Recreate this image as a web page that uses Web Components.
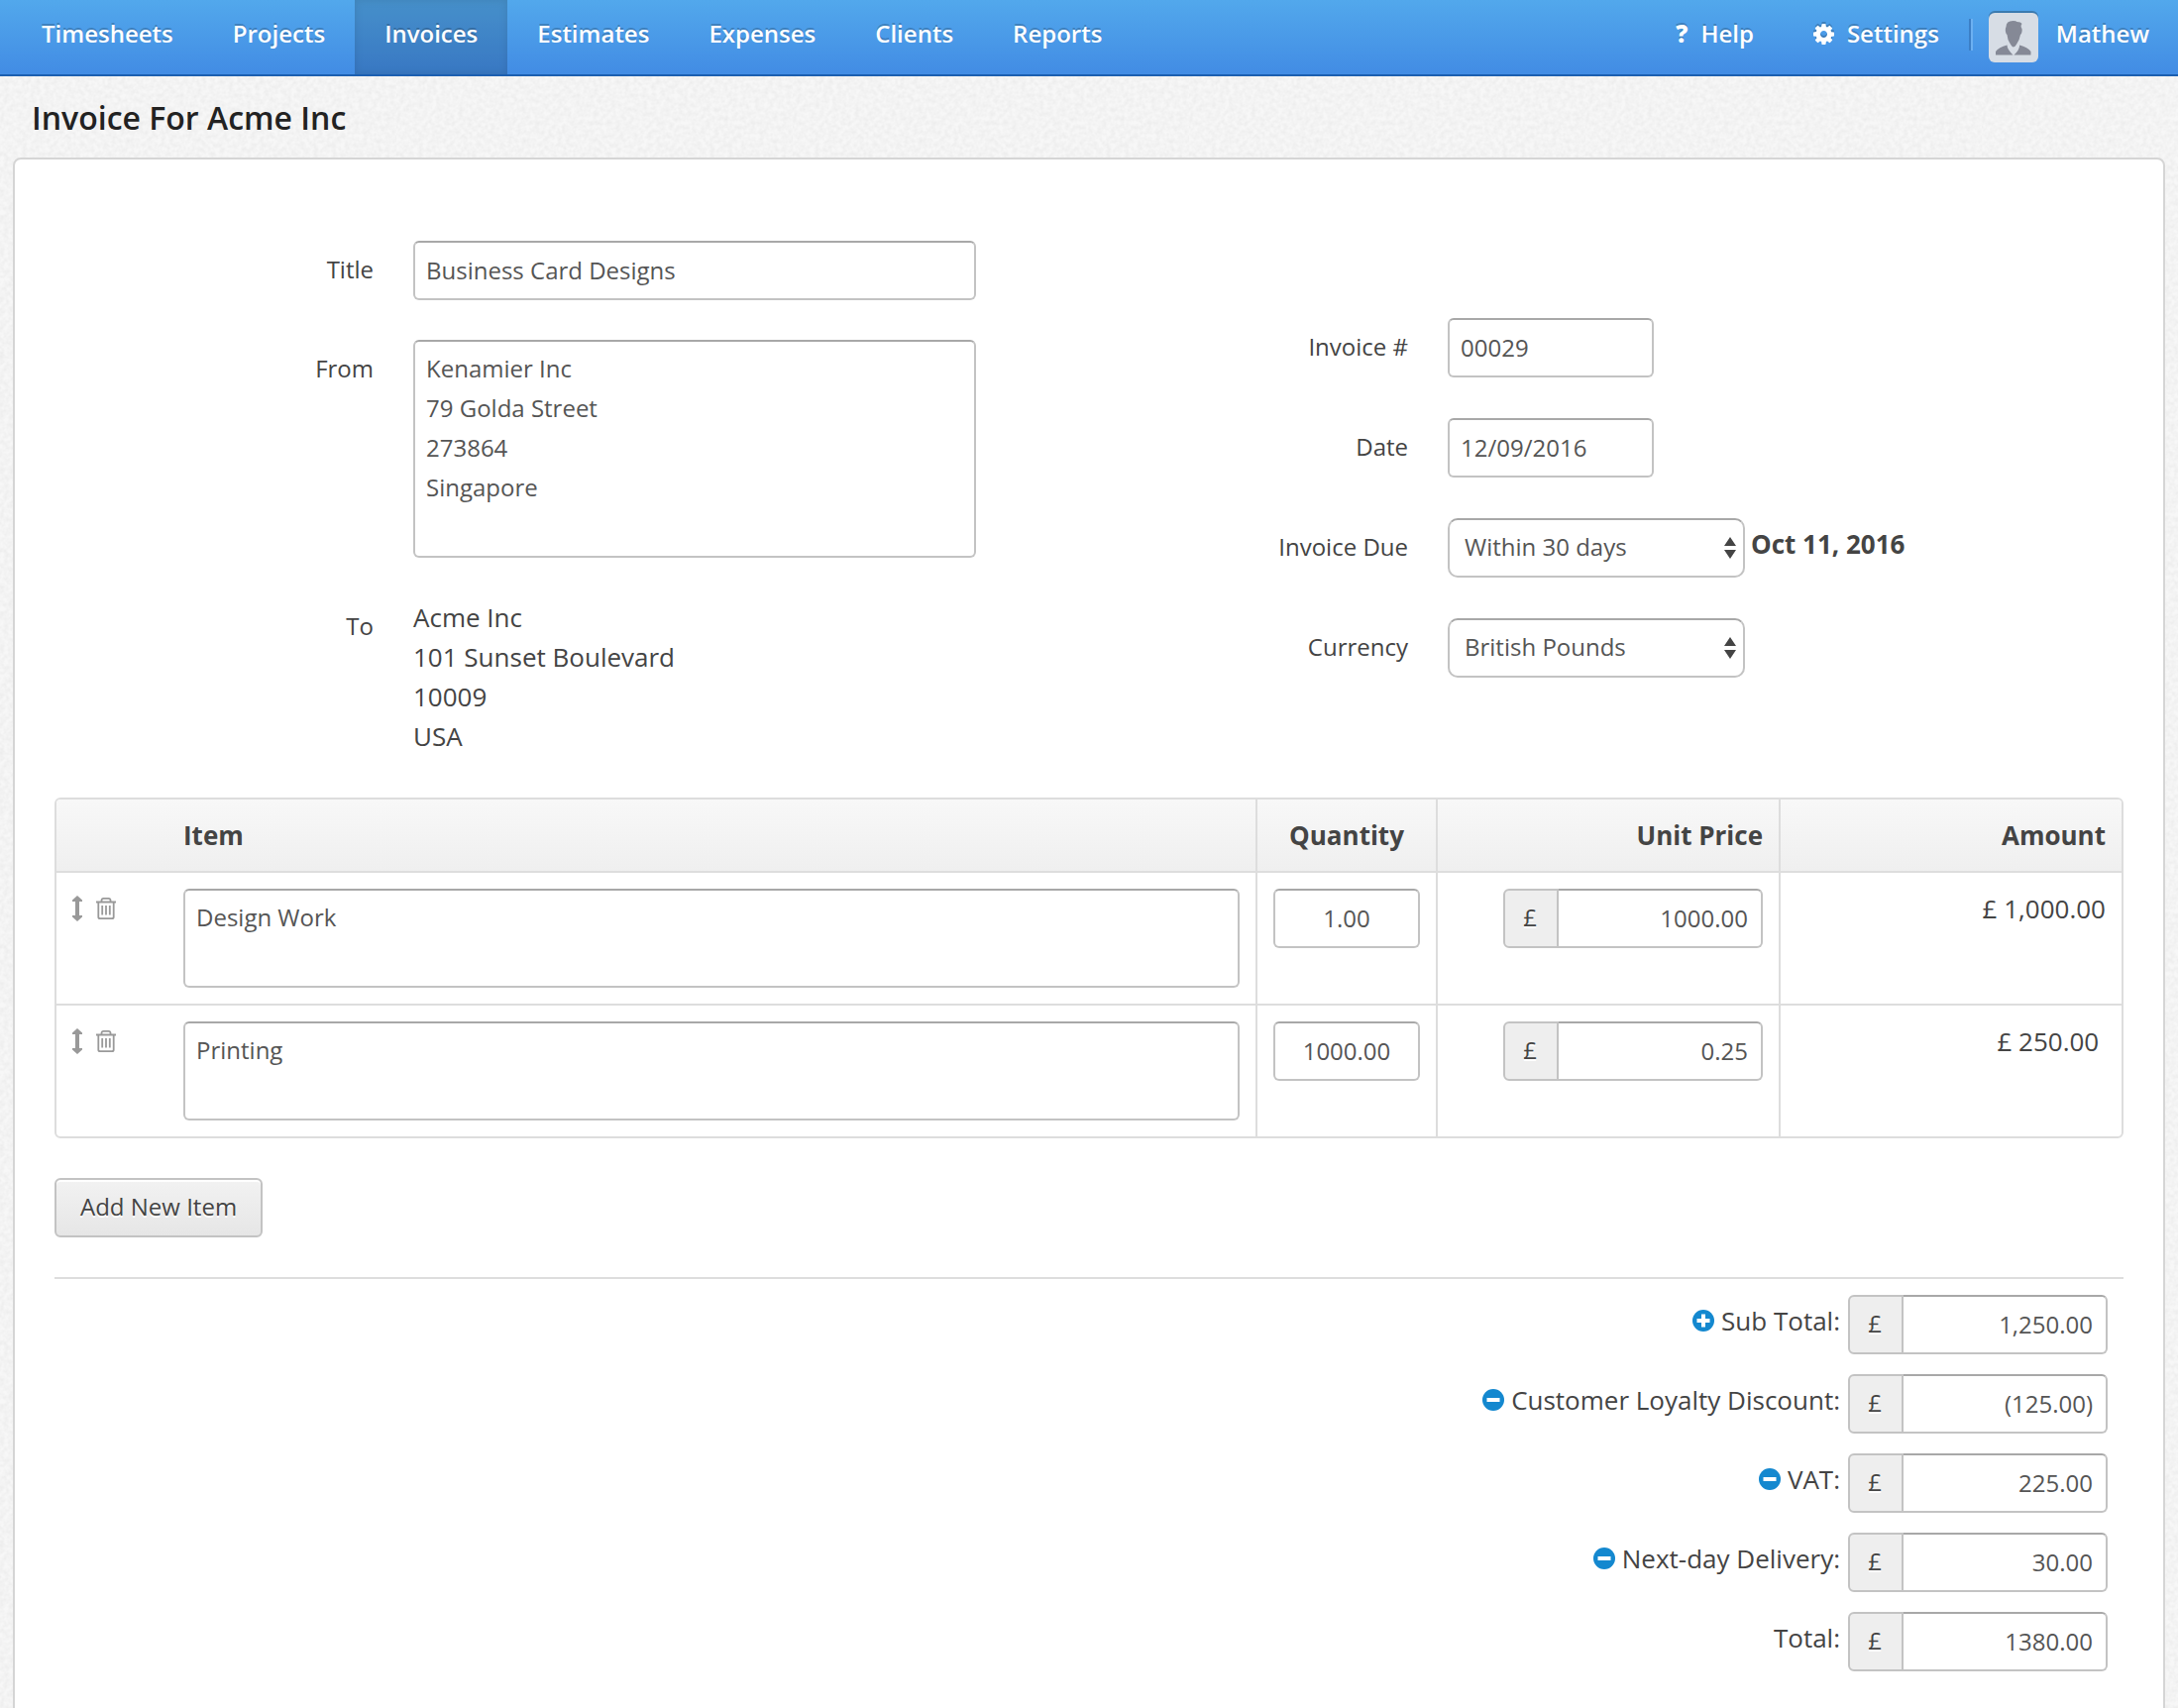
<!DOCTYPE html>
<html lang="en">
<head>
<meta charset="utf-8">
<title>Invoice For Acme Inc</title>
<style>
  html {
    background-color: #f7f7f7;
    background-image: url("data:image/svg+xml,%3Csvg xmlns='http://www.w3.org/2000/svg' width='400' height='400'%3E%3Cfilter id='n' color-interpolation-filters='sRGB'%3E%3CfeTurbulence type='fractalNoise' baseFrequency='.22' numOctaves='2' stitchTiles='stitch'/%3E%3CfeColorMatrix values='0 0 0 0 0 0 0 0 0 0 0 0 0 0 0 .07 0 0 0 -.02'/%3E%3C/filter%3E%3Crect width='400' height='400' filter='url(%23n)'/%3E%3C/svg%3E");
  }
  body {
    margin: 0;
    overflow: hidden;
    color: #444;
    font: 26px/40px "Open Sans", sans-serif;
  }
</style>
</head>
<body>
<invoice-app></invoice-app>

<script>
/* Shared look of text boxes, used by every field-like component */
const FIELD_STYLES = `
  *, *::before, *::after { box-sizing: border-box; }
  input, textarea, select {
    display: block;
    width: 100%;
    margin: 0;
    padding: 7px 11px 9px;
    border: 2px solid #c3c3c3;
    border-top-color: #a8a8a8;
    border-radius: 6px;
    background: #fff;
    color: #555;
    font: inherit;
    font-size: 24px;
    line-height: 40px;
    outline: 0;
  }
  input { height: 60px; }
  textarea { resize: none; overflow: hidden; }
`

class BaseElement extends HTMLElement {
  constructor() {
    super()
    this.attachShadow({ mode: 'open' })
  }

  connectedCallback() {
    this.shadowRoot.innerHTML = `<style>${this.getStyles()}</style>${this.getMarkup()}`
  }

  attr(name, fallback = '') {
    return this.getAttribute(name) || fallback
  }
}

/**
 * Icons
 */
const ICONS = {
  gear: `<svg width="21" height="21" viewBox="0 128 1536 1536"><path fill="currentColor" d="M1024 896q0-106-75-181t-181-75-181 75-75 181 75 181 181 75 181-75 75-181zm512-109v222q0 12-8 23t-20 13l-185 28q-19 54-39 91 35 50 107 138 10 12 10 25t-9 23q-27 37-99 108t-94 71q-12 0-26-9l-138-108q-44 23-91 38-16 136-29 186-7 28-36 28h-222q-14 0-24.500-8.500t-11.500-21.500l-28-184q-49-16-90-37l-141 107q-10 9-25 9-14 0-25-11-126-114-165-168-7-10-7-23 0-12 8-23 15-21 51-66.500t54-70.500q-27-50-41-99l-183-27q-13-2-21-12.500t-8-23.500v-222q0-12 8-23t19-13l186-28q14-46 39-92-40-57-107-138-10-12-10-24 0-10 9-23 26-36 98.500-107.500t94.500-71.500q13 0 26 10l138 107q44-23 91-38 16-136 29-186 7-28 36-28h222q14 0 24.500 8.500t11.500 21.500l28 184q49 16 90 37l142-107q9-9 24-9 13 0 25 10 129 119 165 170 7 8 7 22 0 12-8 23-15 21-51 66.500t-54 70.500q26 50 41 98l183 28q13 2 21 12.500t8 23.500z"/></svg>`,
  move: `<svg width="10" height="26" viewBox="0 0 10 26"><path fill="currentColor" d="M5 0l5 4.500V6H7v14h3v1.500L5 26l-5-4.500V20h3V6H0V4.500z"/></svg>`,
  trash: `<svg width="20" height="22" viewBox="0 0 20 22" fill="none" stroke="currentColor" stroke-width="1.800"><path d="M0 4.500h20M5.500 4V2.800q0-2 2-2h5q2 0 2 2V4M2.300 4.500v15q0 1.700 1.700 1.700h12q1.700 0 1.700-1.700v-15M6.200 8v9.500M10 8v9.500M13.800 8v9.500"/></svg>`,
  plus: `<svg width="22" height="22" viewBox="0 0 22 22"><circle cx="11" cy="11" r="11" fill="#1488cf"/><path d="M11 4.500v13M4.500 11h13" stroke="#fff" stroke-width="4"/></svg>`,
  minus: `<svg width="22" height="22" viewBox="0 0 22 22"><circle cx="11" cy="11" r="11" fill="#1488cf"/><path d="M4.500 11h13" stroke="#fff" stroke-width="4"/></svg>`,
  sort: `<svg width="12" height="22" viewBox="0 0 12 22"><path fill="#444" d="M6 0l6 9H0zM6 22l6-9H0z"/></svg>`,
  avatar: `<svg width="50" height="50" viewBox="0 0 50 50"><g fill="#858996"><path d="M17.500 14q0-6 7-6 3 0 4 1 4 0 5 2-1.500 2-.5 4 1 1 .5 4-.5 3-1.500 3-1 5-3 8-2.500 4.500-4 4.500t-4-4.500q-2-3-2.500-8-1 0-1.500-3-.5-3 .5-5z"/><path d="M18.500 32.500q0 4 6 10H7v-3.500q3-4.500 11.500-6.500zM31 32.500q8.500 2 11.500 6.500v3.500H25.500q6-6 5.500-10z"/></g></svg>`
}

class AppIcon extends BaseElement {
  getStyles() {
    return `
      :host { display: inline-block; flex: none; line-height: 0; }
      svg { display: block; overflow: visible; }
    `
  }

  getMarkup() {
    return ICONS[this.attr('name')] || ''
  }
}

/**
 * Top navigation
 */
class NavLink extends BaseElement {
  getStyles() {
    return `
      :host { display: block; }
      a {
        display: flex;
        align-items: center;
        gap: 13px;
        height: 75px;
        box-sizing: border-box;
        padding: 14px 30px 21px;
        color: #fff;
        font-size: 24px;
        font-weight: 600;
        line-height: 40px;
        text-decoration: none;
        text-shadow: 0 -2px 0 rgba(0, 0, 0, .2);
        white-space: nowrap;
      }
      :host([active]) a {
        background: rgba(0, 0, 0, .14);
        box-shadow: inset 0 0 8px rgba(0, 0, 0, .1);
      }
      ::slotted(span) { font-weight: 800; }
      ::slotted(app-icon) { filter: drop-shadow(0 -2px 0 rgba(0, 0, 0, .2)); }
    `
  }

  getMarkup() {
    const current = this.hasAttribute('active') ? 'aria-current="page"' : ''
    return `<a href="#" ${current}><slot name="icon"></slot><slot></slot></a>`
  }
}

class TopNav extends BaseElement {
  getStyles() {
    return `
      :host {
        display: block;
        background: linear-gradient(#52a8ec, #428ce4);
        border-bottom: 2px solid #1c5fb0;
      }
      nav { display: flex; padding-left: 12px; }
      .right { display: flex; margin-left: auto; }
      .divider {
        width: 2px;
        height: 32px;
        margin-top: 19px;
        background: #3c7fc6;
        border-right: 2px solid #6cb0f1;
      }
      .user a {
        display: flex;
        gap: 18px;
        padding: 13px 29px 10px 16px;
        color: #fff;
        font-size: 24px;
        font-weight: 600;
        line-height: 42px;
        text-decoration: none;
        text-shadow: 0 -2px 0 rgba(0, 0, 0, .2);
      }
      .avatar {
        width: 50px;
        height: 50px;
        border-radius: 6px;
        background: #d7dde5;
        box-shadow: 0 -2px 0 rgba(0, 0, 0, .25);
      }
    `
  }

  getMarkup() {
    return `
      <nav>
        <nav-link>Timesheets</nav-link>
        <nav-link>Projects</nav-link>
        <nav-link active>Invoices</nav-link>
        <nav-link>Estimates</nav-link>
        <nav-link>Expenses</nav-link>
        <nav-link>Clients</nav-link>
        <nav-link>Reports</nav-link>
        <div class="right">
          <nav-link><span slot="icon">?</span>Help</nav-link>
          <nav-link><app-icon slot="icon" name="gear"></app-icon>Settings</nav-link>
          <div class="divider"></div>
          <div class="user">
            <a href="#"><app-icon class="avatar" name="avatar"></app-icon>Mathew</a>
          </div>
        </div>
      </nav>
    `
  }
}

/**
 * Label on the left, control on the right
 */
class FormRow extends BaseElement {
  getStyles() {
    return `
      ${FIELD_STYLES}
      :host { display: flex; align-items: flex-start; gap: 40px; }
      .label {
        flex: none;
        width: 322px;
        padding-top: 9px;
        font-size: 24px;
        text-align: right;
      }
      .control { width: var(--control-width, 568px); }
      .select { display: grid; align-items: center; width: 300px; }
      .select select {
        grid-area: 1 / 1;
        height: 60px;
        padding: 7px 40px 9px 15px;
        border-radius: 10px;
        appearance: none;
      }
      .select app-icon {
        grid-area: 1 / 1;
        justify-self: end;
        margin-right: 9px;
        pointer-events: none;
      }
      .after { padding: 6px 0; margin-left: -34px; font-weight: 700; }
    `
  }

  getControl() {
    const value = this.attr('value')
    switch (this.attr('type', 'text')) {
      case 'textarea':
        return `<div class="control"><textarea id="field" rows="${this.attr('rows')}">${value}</textarea></div>`
      case 'select':
        return `
          <div class="select">
            <select id="field"><option>${value}</option></select>
            <app-icon name="sort"></app-icon>
          </div>`
      case 'static':
        return '<div class="control"><slot></slot></div>'
      default:
        return `<div class="control"><input id="field" type="text" value="${value}"></div>`
    }
  }

  getMarkup() {
    const label = this.attr('label')
    const tag = this.attr('type') === 'static'
      ? `<div class="label">${label}</div>`
      : `<label class="label" for="field">${label}</label>`
    const note = this.attr('note')
    return `${tag}${this.getControl()}${note ? `<strong class="after">${note}</strong>` : ''}`
  }
}

/**
 * Text box with the currency sign in front
 */
class MoneyInput extends BaseElement {
  getStyles() {
    return `
      ${FIELD_STYLES}
      :host { display: flex; width: 262px; }
      .sign {
        flex: none;
        width: 56px;
        padding: 7px 2px 9px 0;
        border: 2px solid #c3c3c3;
        border-radius: 6px 0 0 6px;
        background: #eee;
        font-size: 24px;
        line-height: 40px;
        text-align: center;
        text-shadow: 0 2px 0 #fff;
      }
      input {
        padding-right: 13px;
        border-left: 0;
        border-radius: 0 6px 6px 0;
        text-align: right;
      }
    `
  }

  getMarkup() {
    return `
      <span class="sign">£</span>
      <input type="text" aria-label="${this.attr('label')}" value="${this.attr('value')}">
    `
  }
}

/**
 * Invoice lines
 */
class InvoiceItems extends BaseElement {
  getStyles() {
    return `
      ${FIELD_STYLES}
      :host { display: block; }
      table {
        width: 100%;
        border: 2px solid #ddd;
        border-radius: 6px;
        border-collapse: separate;
        border-spacing: 0;
        table-layout: fixed;
        overflow: hidden;
      }
      th, td { padding: 16px; text-align: right; vertical-align: top; }
      th { background: linear-gradient(#f8f8f8, #efefef); font-weight: 700; }
      td { border-top: 2px solid #ddd; }
      th + th + th, td + td + td { border-left: 2px solid #ddd; }
      .tools { width: 112px; }
      .item { text-align: left; }
      .qty { width: 182px; text-align: center; }
      .money { width: 346px; }
      .tools div { display: flex; align-items: center; gap: 14px; height: 40px; padding-top: 2px; }
      .qty input { text-align: center; }
      button {
        display: block;
        padding: 0;
        border: 0;
        background: none;
        color: #999;
      }
      money-input { margin-left: auto; text-align: left; }
    `
  }

  getRow(item) {
    return `
      <tr>
        <td class="tools">
          <div>
            <button type="button" aria-label="Move"><app-icon name="move"></app-icon></button>
            <button type="button" aria-label="Delete"><app-icon name="trash"></app-icon></button>
          </div>
        </td>
        <td class="item"><textarea rows="2" aria-label="Item">${item.name}</textarea></td>
        <td class="qty"><input type="text" aria-label="Quantity" value="${item.quantity}"></td>
        <td class="money"><money-input label="Unit Price" value="${item.price}"></money-input></td>
        <td class="money">${item.amount}</td>
      </tr>
    `
  }

  getMarkup() {
    const items = [
      { name: 'Design Work', quantity: '1.00', price: '1000.00', amount: '£ 1,000.00' },
      { name: 'Printing', quantity: '1000.00', price: '0.25', amount: '£ 250.00&nbsp;' }
    ]
    return `
      <table>
        <thead>
          <tr>
            <th class="tools"></th>
            <th class="item">Item</th>
            <th class="qty">Quantity</th>
            <th class="money">Unit Price</th>
            <th class="money">Amount</th>
          </tr>
        </thead>
        <tbody>${items.map(item => this.getRow(item)).join('')}</tbody>
      </table>
    `
  }
}

/**
 * One line of the totals block
 */
class TotalRow extends BaseElement {
  getStyles() {
    return `
      :host { display: flex; justify-content: flex-end; gap: 8px; }
      .label { display: flex; align-items: center; gap: 7px; height: 40px; padding-top: 6px; }
      button { padding: 2px 0 0; border: 0; background: none; }
    `
  }

  getMarkup() {
    const icon = this.attr('icon')
    const label = this.attr('label')
    const action = icon === 'plus' ? 'Add' : 'Remove'
    return `
      <div class="label">
        ${icon ? `<button type="button" aria-label="${action}"><app-icon name="${icon}"></app-icon></button>` : ''}
        <span>${label}:</span>
      </div>
      <money-input label="${label}" value="${this.attr('value')}"></money-input>
    `
  }
}

class PlainButton extends BaseElement {
  getStyles() {
    return `
      :host { display: block; }
      button {
        display: block;
        height: 60px;
        padding: 7px 24px 9px;
        border: 2px solid #c3c3c3;
        border-radius: 6px;
        background: linear-gradient(#f2f2f2, #e6e6e6);
        box-shadow: inset 0 2px 0 #fff;
        color: #444;
        font: inherit;
        font-size: 24px;
        line-height: 40px;
        text-shadow: 0 2px 0 #fff;
      }
    `
  }

  getMarkup() {
    return '<button type="button"><slot></slot></button>'
  }
}

class InvoiceApp extends BaseElement {
  getStyles() {
    return `
      :host { display: block; }
      h1 {
        margin: 0;
        padding: 22px 32px 20px;
        color: #222;
        font-size: 32px;
        font-weight: 600;
        line-height: 40px;
      }
      main {
        margin: 0 13px;
        padding: 82px 40px 60px;
        border: 2px solid #d5d5d5;
        border-radius: 8px;
        background: #fff;
      }
      .details { display: flex; margin-bottom: 42px; }
      .left, .right { display: flex; flex-direction: column; flex: 1; }
      .left { gap: 40px; }
      .right {
        --control-width: 208px;
        gap: 41px;
        padding-top: 78px;
      }
      plain-button { margin-top: 40px; }
      hr { margin: 40px 0 16px; border: 0; border-top: 2px solid #ddd; }
      .totals { display: grid; gap: 20px; padding-right: 16px; }
    `
  }

  getMarkup() {
    return `
      <top-nav></top-nav>
      <h1>Invoice For Acme Inc</h1>
      <main>
        <div class="details">
          <div class="left">
            <form-row label="Title" value="Business Card Designs"></form-row>
            <form-row label="From" type="textarea" rows="5" value="Kenamier Inc\n79 Golda Street\n273864\nSingapore"></form-row>
            <form-row label="To" type="static">Acme Inc<br>101 Sunset Boulevard<br>10009<br>USA</form-row>
          </div>
          <div class="right">
            <form-row label="Invoice #" value="00029"></form-row>
            <form-row label="Date" value="12/09/2016"></form-row>
            <form-row label="Invoice Due" type="select" value="Within 30 days" note="Oct 11, 2016"></form-row>
            <form-row label="Currency" type="select" value="British Pounds"></form-row>
          </div>
        </div>
        <invoice-items></invoice-items>
        <plain-button>Add New Item</plain-button>
        <hr>
        <div class="totals">
          <total-row icon="plus" label="Sub Total" value="1,250.00"></total-row>
          <total-row icon="minus" label="Customer Loyalty Discount" value="(125.00)"></total-row>
          <total-row icon="minus" label="VAT" value="225.00"></total-row>
          <total-row icon="minus" label="Next-day Delivery" value="30.00"></total-row>
          <total-row label="Total" value="1380.00"></total-row>
        </div>
      </main>
    `
  }
}

// Register the custom elements
customElements.define('app-icon', AppIcon)
customElements.define('nav-link', NavLink)
customElements.define('top-nav', TopNav)
customElements.define('form-row', FormRow)
customElements.define('money-input', MoneyInput)
customElements.define('invoice-items', InvoiceItems)
customElements.define('total-row', TotalRow)
customElements.define('plain-button', PlainButton)
customElements.define('invoice-app', InvoiceApp)
</script>
</body>
</html>
